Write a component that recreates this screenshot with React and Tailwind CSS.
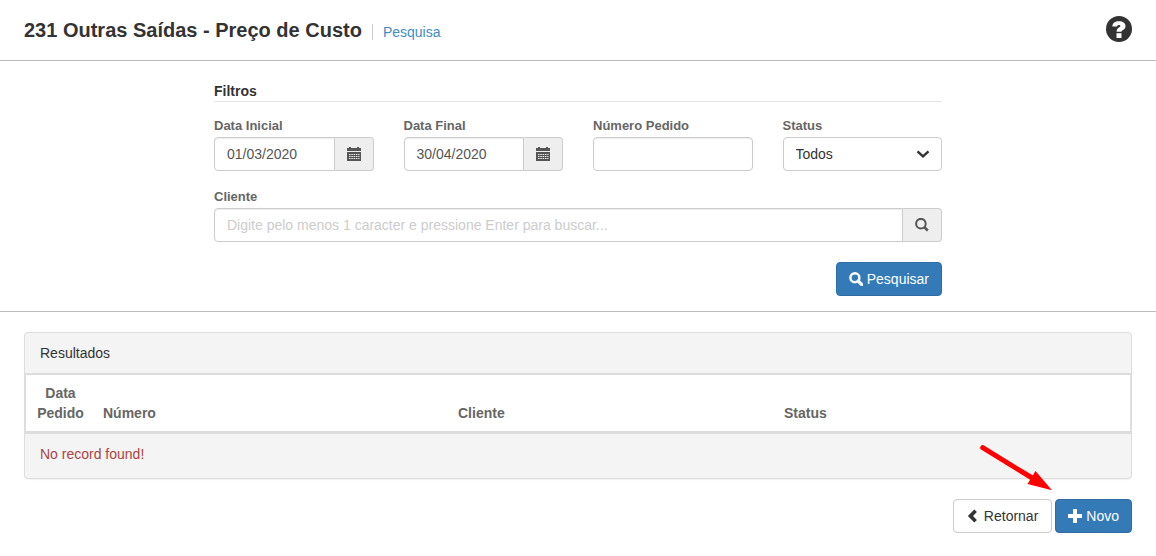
import React from 'react'

const HelpIcon = () => (
  <svg viewBox="0 0 26 26" className="size-[26px]" aria-hidden="true">
    <circle cx="13" cy="13" r="13" fill="#333" />
    <path
      d="M6.400 10.400C6.400 7 9 5.200 13 5.200c3.900 0 6.500 1.900 6.500 4.900 0 2.300-1.300 3.400-2.800 4.200-.9.500-1.200.8-1.200 1.400h-4.900c0-2.200.8-3.200 2.400-4.200 1-.6 1.400-.9 1.400-1.500 0-.7-.6-1.100-1.500-1.100-1.100 0-1.700.5-1.800 1.500z"
      fill="#fff"
    />
    <rect x="10.500" y="17.200" width="5" height="4.800" fill="#fff" />
  </svg>
)

const CalendarIcon = () => (
  <svg viewBox="0 0 14 14" className="size-[14px]" fill="currentColor" aria-hidden="true">
    <path d="M0 1h2V0h2v1h6V0h2v1h2v3H0z" />
    <path
      fillRule="evenodd"
      d="M0 5h14v9H0zM2 7v1h1.500V7zM4.300 7v1h1.500V7zM6.600 7v1h1.500V7zM8.900 7v1h1.500V7zM11.200 7v1h1.300V7zM2 9v1h1.500V9zM4.300 9v1h1.500V9zM6.600 9v1h1.500V9zM8.900 9v1h1.500V9zM11.200 9v1h1.300V9zM2 11v1h1.500v-1zM4.300 11v1h1.500v-1zM6.600 11v1h1.500v-1zM8.900 11v1h1.500v-1zM11.200 11v1h1.300v-1z"
    />
  </svg>
)

const SearchIcon = ({ bold }) => (
  <svg
    viewBox="0 0 14 14"
    className="size-[14px]"
    fill="none"
    stroke="currentColor"
    strokeWidth={bold ? 2.4 : 2}
    aria-hidden="true"
  >
    <circle cx="5.900" cy="5.700" r={bold ? 4.5 : 4.8} />
    <path d="M9.200 9l3.600 3.600" strokeWidth={bold ? 3.2 : 2.6} strokeLinecap={bold ? 'round' : 'butt'} />
  </svg>
)

const ChevronDownIcon = () => (
  <svg viewBox="0 0 14 14" className="size-[14px]" fill="none" stroke="currentColor" strokeWidth="2.400" aria-hidden="true">
    <path d="M1.500 4.300L7 9.300l5.500-5" />
  </svg>
)

const ChevronLeftIcon = () => (
  <svg viewBox="0 0 14 14" className="size-[14px]" fill="currentColor" aria-hidden="true">
    <path d="M8.300.6l2.600 2.500L7 7l3.900 3.900-2.600 2.500L1.900 7z" />
  </svg>
)

const PlusIcon = () => (
  <svg viewBox="0 0 14 14" className="size-[14px]" fill="currentColor" aria-hidden="true">
    <path d="M5 0h4v5h5v4H9v5H5V9H0V5h5z" />
  </svg>
)

const inputClass =
  'h-[34px] w-full min-w-0 border border-[#ccc] bg-white px-3 text-sm text-[#555] shadow-[inset_0_1px_1px_rgba(0,0,0,0.075)] outline-none placeholder:text-[#ccc]'

const addonClass =
  'flex w-[39px] shrink-0 items-center justify-center rounded-r border border-l-0 border-[#ccc] bg-[#eee] text-[#555]'

const primaryClass =
  'flex h-[34px] items-center gap-1 rounded border border-[#2e6da4] bg-[#337ab7] px-3 text-sm text-white'

const Field = ({ id, label, children }) => (
  <div className="min-w-0">
    <label htmlFor={id} className="block text-[13px] leading-[22px] font-bold text-[#666]">
      {label}
    </label>
    {children}
  </div>
)

const DateField = ({ id, label, value }) => (
  <Field id={id} label={label}>
    <div className="flex">
      <input id={id} type="text" defaultValue={value} className={`${inputClass} rounded-l`} />
      <button type="button" aria-label={`Abrir calendário: ${label}`} className={addonClass}>
        <CalendarIcon />
      </button>
    </div>
  </Field>
)

const Header = () => (
  <header className="flex items-center justify-between border-b border-[#bbb] px-6 py-4">
    <div className="flex items-center">
      <h1 className="text-xl font-bold text-[#333]">231 Outras Saídas - Preço de Custo</h1>
      <span className="mt-1 ml-2.5 h-4 w-px bg-[#ccc]" />
      <a href="#pesquisa" className="mt-1 ml-2.5 text-sm text-[#428bca]">
        Pesquisa
      </a>
    </div>
    <button type="button" aria-label="Ajuda" className="pb-0.5">
      <HelpIcon />
    </button>
  </header>
)

const Filters = () => (
  <section className="border-b border-[#bbb] px-6 pt-5 pb-[15px]">
    <form className="mx-auto max-w-[728px]" onSubmit={(e) => e.preventDefault()}>
      <h2 className="border-b border-[#e5e5e5] text-sm font-bold text-[#333]">Filtros</h2>
      <div className="mt-[13px] grid grid-cols-2 gap-x-[30px] gap-y-[15px] sm:grid-cols-4">
        <DateField id="data-inicial" label="Data Inicial" value="01/03/2020" />
        <DateField id="data-final" label="Data Final" value="30/04/2020" />
        <Field id="numero-pedido" label="Número Pedido">
          <input id="numero-pedido" type="text" className={`${inputClass} rounded`} />
        </Field>
        <Field id="status" label="Status">
          <div className="relative">
            <select
              id="status"
              className="h-[34px] w-full appearance-none rounded border border-[#ccc] bg-white px-3 text-sm text-[#333]"
            >
              <option>Todos</option>
            </select>
            <span className="pointer-events-none absolute inset-y-0 right-3 flex items-center text-[#333]">
              <ChevronDownIcon />
            </span>
          </div>
        </Field>
      </div>
      <div className="mt-[15px]">
        <Field id="cliente" label="Cliente">
          <div className="flex">
            <input
              id="cliente"
              type="text"
              placeholder="Digite pelo menos 1 caracter e pressione Enter para buscar..."
              className={`${inputClass} rounded-l`}
            />
            <button type="button" aria-label="Buscar cliente" className={addonClass}>
              <SearchIcon />
            </button>
          </div>
        </Field>
      </div>
      <div className="mt-5 flex justify-end">
        <button type="submit" className={primaryClass}>
          <SearchIcon bold />
          Pesquisar
        </button>
      </div>
    </form>
  </section>
)

const Results = () => (
  <section className="rounded border border-[#ddd] bg-[#f4f4f4] text-sm shadow-[0_1px_1px_rgba(0,0,0,0.05)]">
    <h2 className="border-b border-[#ddd] px-[15px] py-2.5 text-[#333]">Resultados</h2>
    <table className="w-full table-fixed border-separate border-spacing-0 border border-b-2 border-[#ddd] bg-white text-[#666]">
      <thead>
        <tr className="align-bottom">
          <th className="w-[69px] p-2 text-center">Data Pedido</th>
          <th className="w-[355px] p-2 text-left">Número</th>
          <th className="w-[326px] p-2 text-left">Cliente</th>
          <th className="p-2 text-left">Status</th>
        </tr>
      </thead>
    </table>
    <p className="border-t border-[#ddd] px-[15px] pt-2.5 pb-3.5 text-[#a94442]">No record found!</p>
  </section>
)

const Actions = () => (
  <div className="relative mt-5 flex justify-end gap-[3px]">
    <button
      type="button"
      className="flex h-[34px] items-center gap-1 rounded border border-[#ccc] bg-white pr-[13px] pl-3 text-sm text-[#333]"
    >
      <ChevronLeftIcon />
      Retornar
    </button>
    <button type="button" className={primaryClass}>
      <PlusIcon />
      Novo
    </button>
    {/* pointer to the "Novo" button */}
    <svg
      viewBox="0 0 74 48"
      className="pointer-events-none absolute right-[79px] bottom-[42px] h-12 w-[74px]"
      aria-hidden="true"
    >
      <path d="M3.700 4.700L54 35.500" stroke="#f00" strokeWidth="5" strokeLinecap="round" />
      <path d="M56.500 28L73 47.300 48.500 41z" fill="#f00" />
    </svg>
  </div>
)

const App = () => (
  <div className="min-h-screen bg-white font-['Liberation_Sans',Arial,sans-serif]">
    <Header />
    <Filters />
    <main className="px-6 py-5">
      <Results />
      <Actions />
    </main>
  </div>
)

export default App
